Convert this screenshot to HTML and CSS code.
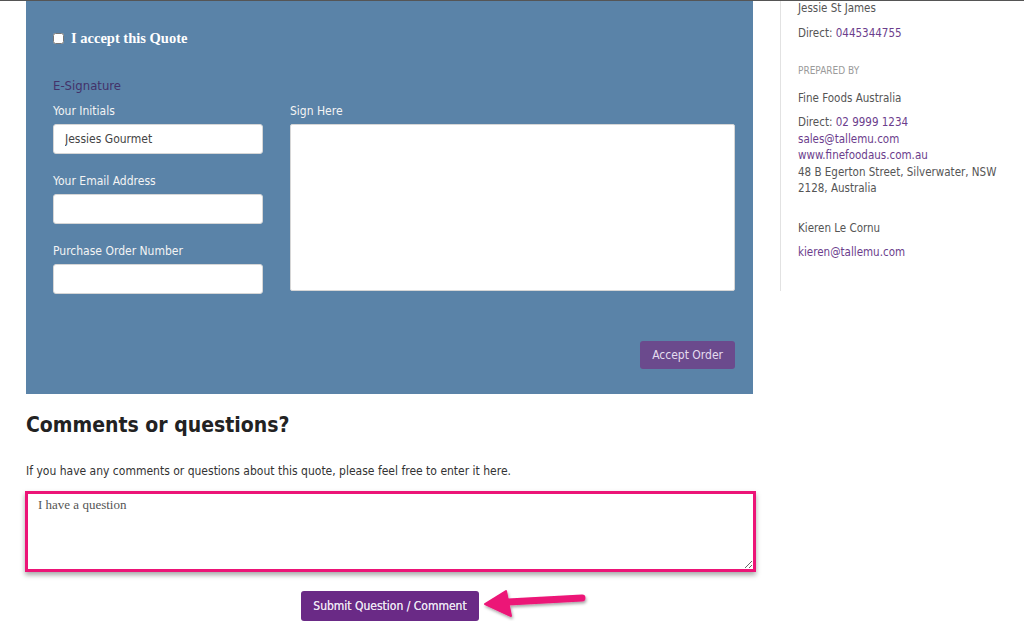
FILE: index.html
```html
<!DOCTYPE html>
<html lang="en">
<head>
    <meta charset="UTF-8">
    <title>Quote - Jessies Gourmet</title>
    <link rel="stylesheet" href="styles.css">
</head>
<body>
    <div class="page">
        <div class="main">
            <div class="accept-panel">
                <label class="accept-check">
                    <input type="checkbox">
                    <span>I accept this Quote</span>
                </label>

                <h3 class="esig-title">E-Signature</h3>

                <div class="esig-grid">
                    <div class="esig-fields">
                        <label class="field-label" for="initials">Your Initials</label>
                        <input class="field" id="initials" type="text" value="Jessies Gourmet">

                        <label class="field-label" for="email">Your Email Address</label>
                        <input class="field" id="email" type="text">

                        <label class="field-label" for="po">Purchase Order Number</label>
                        <input class="field" id="po" type="text">
                    </div>
                    <div class="esig-sign">
                        <div class="field-label">Sign Here</div>
                        <div class="sign-box"></div>
                    </div>
                </div>

                <div class="accept-actions">
                    <button class="btn-accept">Accept Order</button>
                </div>
            </div>

            <h2 class="comments-title">Comments or questions?</h2>
            <p class="comments-intro">If you have any comments or questions about this quote, please feel free to enter it here.</p>

            <textarea class="comment-box">I have a question</textarea>

            <div class="submit-row">
                <button class="btn-submit">Submit Question / Comment</button>
                <svg class="arrow" width="110" height="34" viewBox="0 0 110 34">
                    <defs>
                        <filter id="arrowShadow" x="-10%" y="-30%" width="130%" height="170%">
                            <feDropShadow dx="1" dy="2" stdDeviation="1.5" flood-color="#000" flood-opacity="0.35"/>
                        </filter>
                    </defs>
                    <g filter="url(#arrowShadow)" fill="#ec1477" stroke="#ec1477" stroke-linejoin="round">
                        <path d="M26 15 L100 11" stroke-width="7" stroke-linecap="round" fill="none"/>
                        <path d="M3 17 L24 4 L29 29 Z" stroke-width="2"/>
                    </g>
                </svg>
            </div>
        </div>

        <div class="sidebar">
            <p class="side-line">Jessie St James</p>
            <p class="side-line gap">Direct: <a href="#">0445344755</a></p>

            <p class="side-heading">PREPARED BY</p>

            <p class="side-line">Fine Foods Australia</p>
            <div class="side-block">
                Direct: <a href="#">02 9999 1234</a><br>
                <a href="#">sales@tallemu.com</a><br>
                <a href="#">www.finefoodaus.com.au</a><br>
                48 B Egerton Street, Silverwater, NSW<br>
                2128, Australia
            </div>

            <p class="side-line">Kieren Le Cornu</p>
            <p class="side-line"><a href="#">kieren@tallemu.com</a></p>
        </div>
    </div>
</body>
</html>
```

FILE: styles.css
```css
body {
    margin: 0;
    background-color: white;
    border-top: 1px solid #555;
    font-family: "DejaVu Sans Condensed", "DejaVu Sans", sans-serif;
    font-stretch: condensed;
    color: #444;
}

.page {
    display: flex;
    align-items: flex-start;
}

.main {
    width: 727px;
    margin-left: 26px;
}

.accept-panel {
    background-color: #5a83a8;
    height: 393px;
    box-sizing: border-box;
    padding: 29px 18px 0 27px;
}

.accept-check {
    display: flex;
    align-items: center;
    gap: 7px;
    color: white;
    font-family: "Liberation Serif", serif;
    font-weight: bold;
    font-size: 14.5px;
}

.accept-check input {
    margin: 0;
    width: 11px;
    height: 11px;
}

.esig-title {
    margin: 31px 0 0;
    font-size: 13px;
    font-weight: normal;
    color: #43326a;
    line-height: 16px;
}

.esig-grid {
    display: flex;
    gap: 27px;
    margin-top: 9px;
}

.esig-fields {
    width: 210px;
    display: flex;
    flex-direction: column;
}

.esig-sign {
    flex: 1;
}

.field-label {
    display: block;
    color: #f4f4f4;
    font-size: 12px;
    line-height: 16px;
    margin-bottom: 5px;
}

.field {
    height: 30px;
    box-sizing: border-box;
    border: 1px solid #d6d6d6;
    border-radius: 3px;
    background-color: white;
    padding: 0 11px;
    font-family: inherit;
    font-size: 12px;
    color: #444;
    margin-bottom: 19px;
}

.field:last-child {
    margin-bottom: 0;
}

.sign-box {
    height: 167px;
    background-color: white;
    border: 1px solid #d6d6d6;
    border-radius: 2px;
    box-sizing: border-box;
}

.accept-actions {
    display: flex;
    justify-content: flex-end;
    margin-top: 47px;
}

.btn-accept {
    background-color: #6b4a8d;
    color: #e4dcef;
    border: none;
    border-radius: 3px;
    height: 28px;
    padding: 0 12px;
    font-family: inherit;
    font-size: 12px;
    cursor: pointer;
}

.comments-title {
    margin: 18px 0 0;
    font-size: 21px;
    font-weight: bold;
    color: #222;
    line-height: 26px;
}

.comments-intro {
    margin: 25px 0 0;
    font-size: 12px;
    color: #333;
    line-height: 16px;
}

.comment-box {
    display: block;
    width: 731px;
    height: 81px;
    margin: 12px 0 0 -1px;
    box-sizing: border-box;
    border: 3px solid #ec1477;
    box-shadow: 0 3px 5px rgba(0, 0, 0, 0.35);
    padding: 3px 10px;
    font-family: "Liberation Serif", serif;
    font-size: 13px;
    color: #555;
    resize: vertical;
}

.submit-row {
    display: flex;
    align-items: center;
    margin: 19px 0 0 275px;
}

.btn-submit {
    background-color: #6a2a86;
    color: #ece4f3;
    border: none;
    border-radius: 3px;
    height: 30px;
    width: 178px;
    white-space: nowrap;
    font-family: inherit;
    font-size: 12px;
    text-shadow: 0 0 0.4px #ece4f3;
    cursor: pointer;
}

.arrow {
    margin-left: 3px;
    margin-top: -4px;
}

.sidebar {
    margin-left: 27px;
    border-left: 1px solid #e2e2e2;
    padding-left: 17px;
    width: 220px;
    height: 290px;
    font-size: 11.5px;
    line-height: 16.5px;
    color: #555;
}

.sidebar a {
    color: #6b3d8c;
    text-decoration: none;
}

.sidebar p {
    margin: 0;
}

.side-line {
    margin-bottom: 8px !important;
}

.side-line:first-child {
    margin-top: -1px !important;
}

.side-line.gap {
    margin-bottom: 22px !important;
}

.side-heading {
    font-size: 10px;
    color: #9a9a9a;
    margin-bottom: 10px !important;
}

.side-block {
    margin-bottom: 23px;
}
```
